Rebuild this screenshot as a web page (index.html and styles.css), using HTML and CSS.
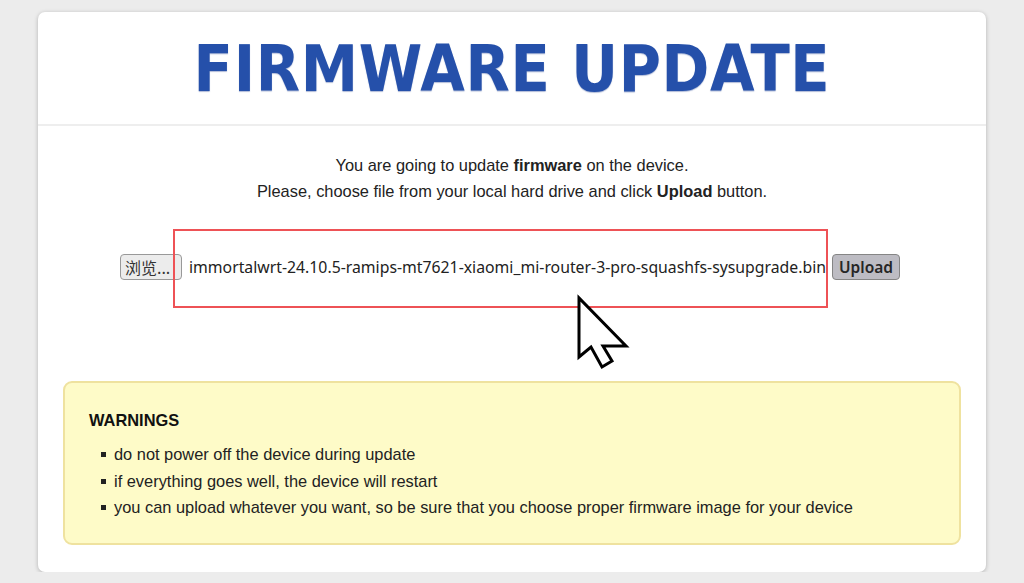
FILE: index.html
```html
<!DOCTYPE html>
<html lang="en">
<head>
    <meta charset="UTF-8">
    <meta name="viewport" content="width=device-width, initial-scale=1.0">
    <title>Firmware update</title>
    <link rel="stylesheet" href="styles.css">
</head>
<body>
    <div class="card">
        <!-- header -->
        <div class="card-header">
            <h1>FIRMWARE UPDATE</h1>
        </div>

        <!-- body -->
        <div class="card-body">
            <p class="intro">
                You are going to update <b>firmware</b> on the device.<br>
                Please, choose file from your local hard drive and click <b>Upload</b> button.
            </p>

            <form class="upload-row" onsubmit="return false;">
                <button type="button" class="browse-btn">浏览...</button>
                <span class="file-name">immortalwrt-24.10.5-ramips-mt7621-xiaomi_mi-router-3-pro-squashfs-sysupgrade.bin</span>
                <button type="submit" class="upload-btn">Upload</button>
            </form>

            <div class="warnings">
                <h3>WARNINGS</h3>
                <ul>
                    <li>do not power off the device during update</li>
                    <li>if everything goes well, the device will restart</li>
                    <li>you can upload whatever you want, so be sure that you choose proper firmware image for your device</li>
                </ul>
            </div>
        </div>

        <!-- annotation -->
        <div class="highlight"></div>
        <svg class="cursor" width="70" height="85" viewBox="0 0 70 85">
            <path d="M9 8 L9 67 L21 57 L32 77 L42 71 L33 56 L56 56 Z" fill="#fff" stroke="#000" stroke-width="3" stroke-linejoin="miter"/>
        </svg>
    </div>
</body>
</html>
```

FILE: styles.css
```css
* {
    margin: 0;
    padding: 0;
    box-sizing: border-box;
}

body {
    font-family: "Liberation Sans", Arial, sans-serif;
    background-color: #ececec;
    color: #222;
}

.card {
    position: relative;
    width: 948px;
    height: 560px;
    margin: 12px auto 0;
    background-color: #fff;
    border-radius: 7px;
    box-shadow: 0 1px 4px rgba(0,0,0,0.25);
}

/* header */
.card-header {
    height: 114px;
    border-bottom: 2px solid #eee;
    text-align: center;
    padding-top: 25px;
}

.card-header h1 {
    font-family: "DejaVu Sans Condensed", "DejaVu Sans", sans-serif;
    font-weight: bold;
    font-size: 64px;
    line-height: 64px;
    color: #2550aa;
    text-shadow: 0 1px 1px rgba(30,60,140,0.35);
    letter-spacing: 0.7px;
}

/* body */
.card-body {
    padding: 26px 25px 0;
}

.intro {
    text-align: center;
    font-size: 16.4px;
    line-height: 26px;
}

.upload-row {
    display: flex;
    justify-content: center;
    align-items: center;
    margin-top: 50px;
    height: 26px;
    padding-right: 4px;
}

.browse-btn,
.upload-btn {
    height: 26px;
    border: 1px solid #999;
    border-radius: 4px;
    font-size: 15px;
    color: #333;
    cursor: pointer;
}

.browse-btn {
    width: 62px;
    padding: 0 4px;
    background-color: #ececec;
    font-family: "Noto Sans CJK SC", "Noto Sans", sans-serif;
    font-size: 16px;
    text-align: left;
}

.file-name {
    font-family: "Noto Sans", sans-serif;
    font-size: 15.8px;
    color: #222;
    margin: 0 6px 0 7px;
}

.upload-btn {
    padding: 0 6px;
    background-color: #bdbcc3;
    border-color: #858585;
    font-family: "Noto Sans", sans-serif;
    font-weight: 600;
    font-size: 15.5px;
    color: #262626;
}

/* warnings */
.warnings {
    margin-top: 101px;
    height: 164px;
    background-color: #fefbc8;
    border: 2px solid #efe29f;
    border-radius: 9px;
    padding: 27px 24px 0;
}

.warnings h3 {
    font-size: 16.4px;
    line-height: 20px;
    color: #111;
}

.warnings ul {
    list-style: none;
    margin-top: 11px;
}

.warnings li {
    position: relative;
    padding-left: 25px;
    font-size: 16.4px;
    line-height: 26.5px;
    color: #222;
}

.warnings li::before {
    content: "";
    position: absolute;
    left: 12px;
    top: 11px;
    width: 5px;
    height: 5px;
    background-color: #222;
}

/* annotation overlay */
.highlight {
    position: absolute;
    left: 135px;
    top: 217px;
    width: 655px;
    height: 79px;
    border: 2px solid #ee5256;
}

.cursor {
    position: absolute;
    left: 532px;
    top: 278px;
}
```
